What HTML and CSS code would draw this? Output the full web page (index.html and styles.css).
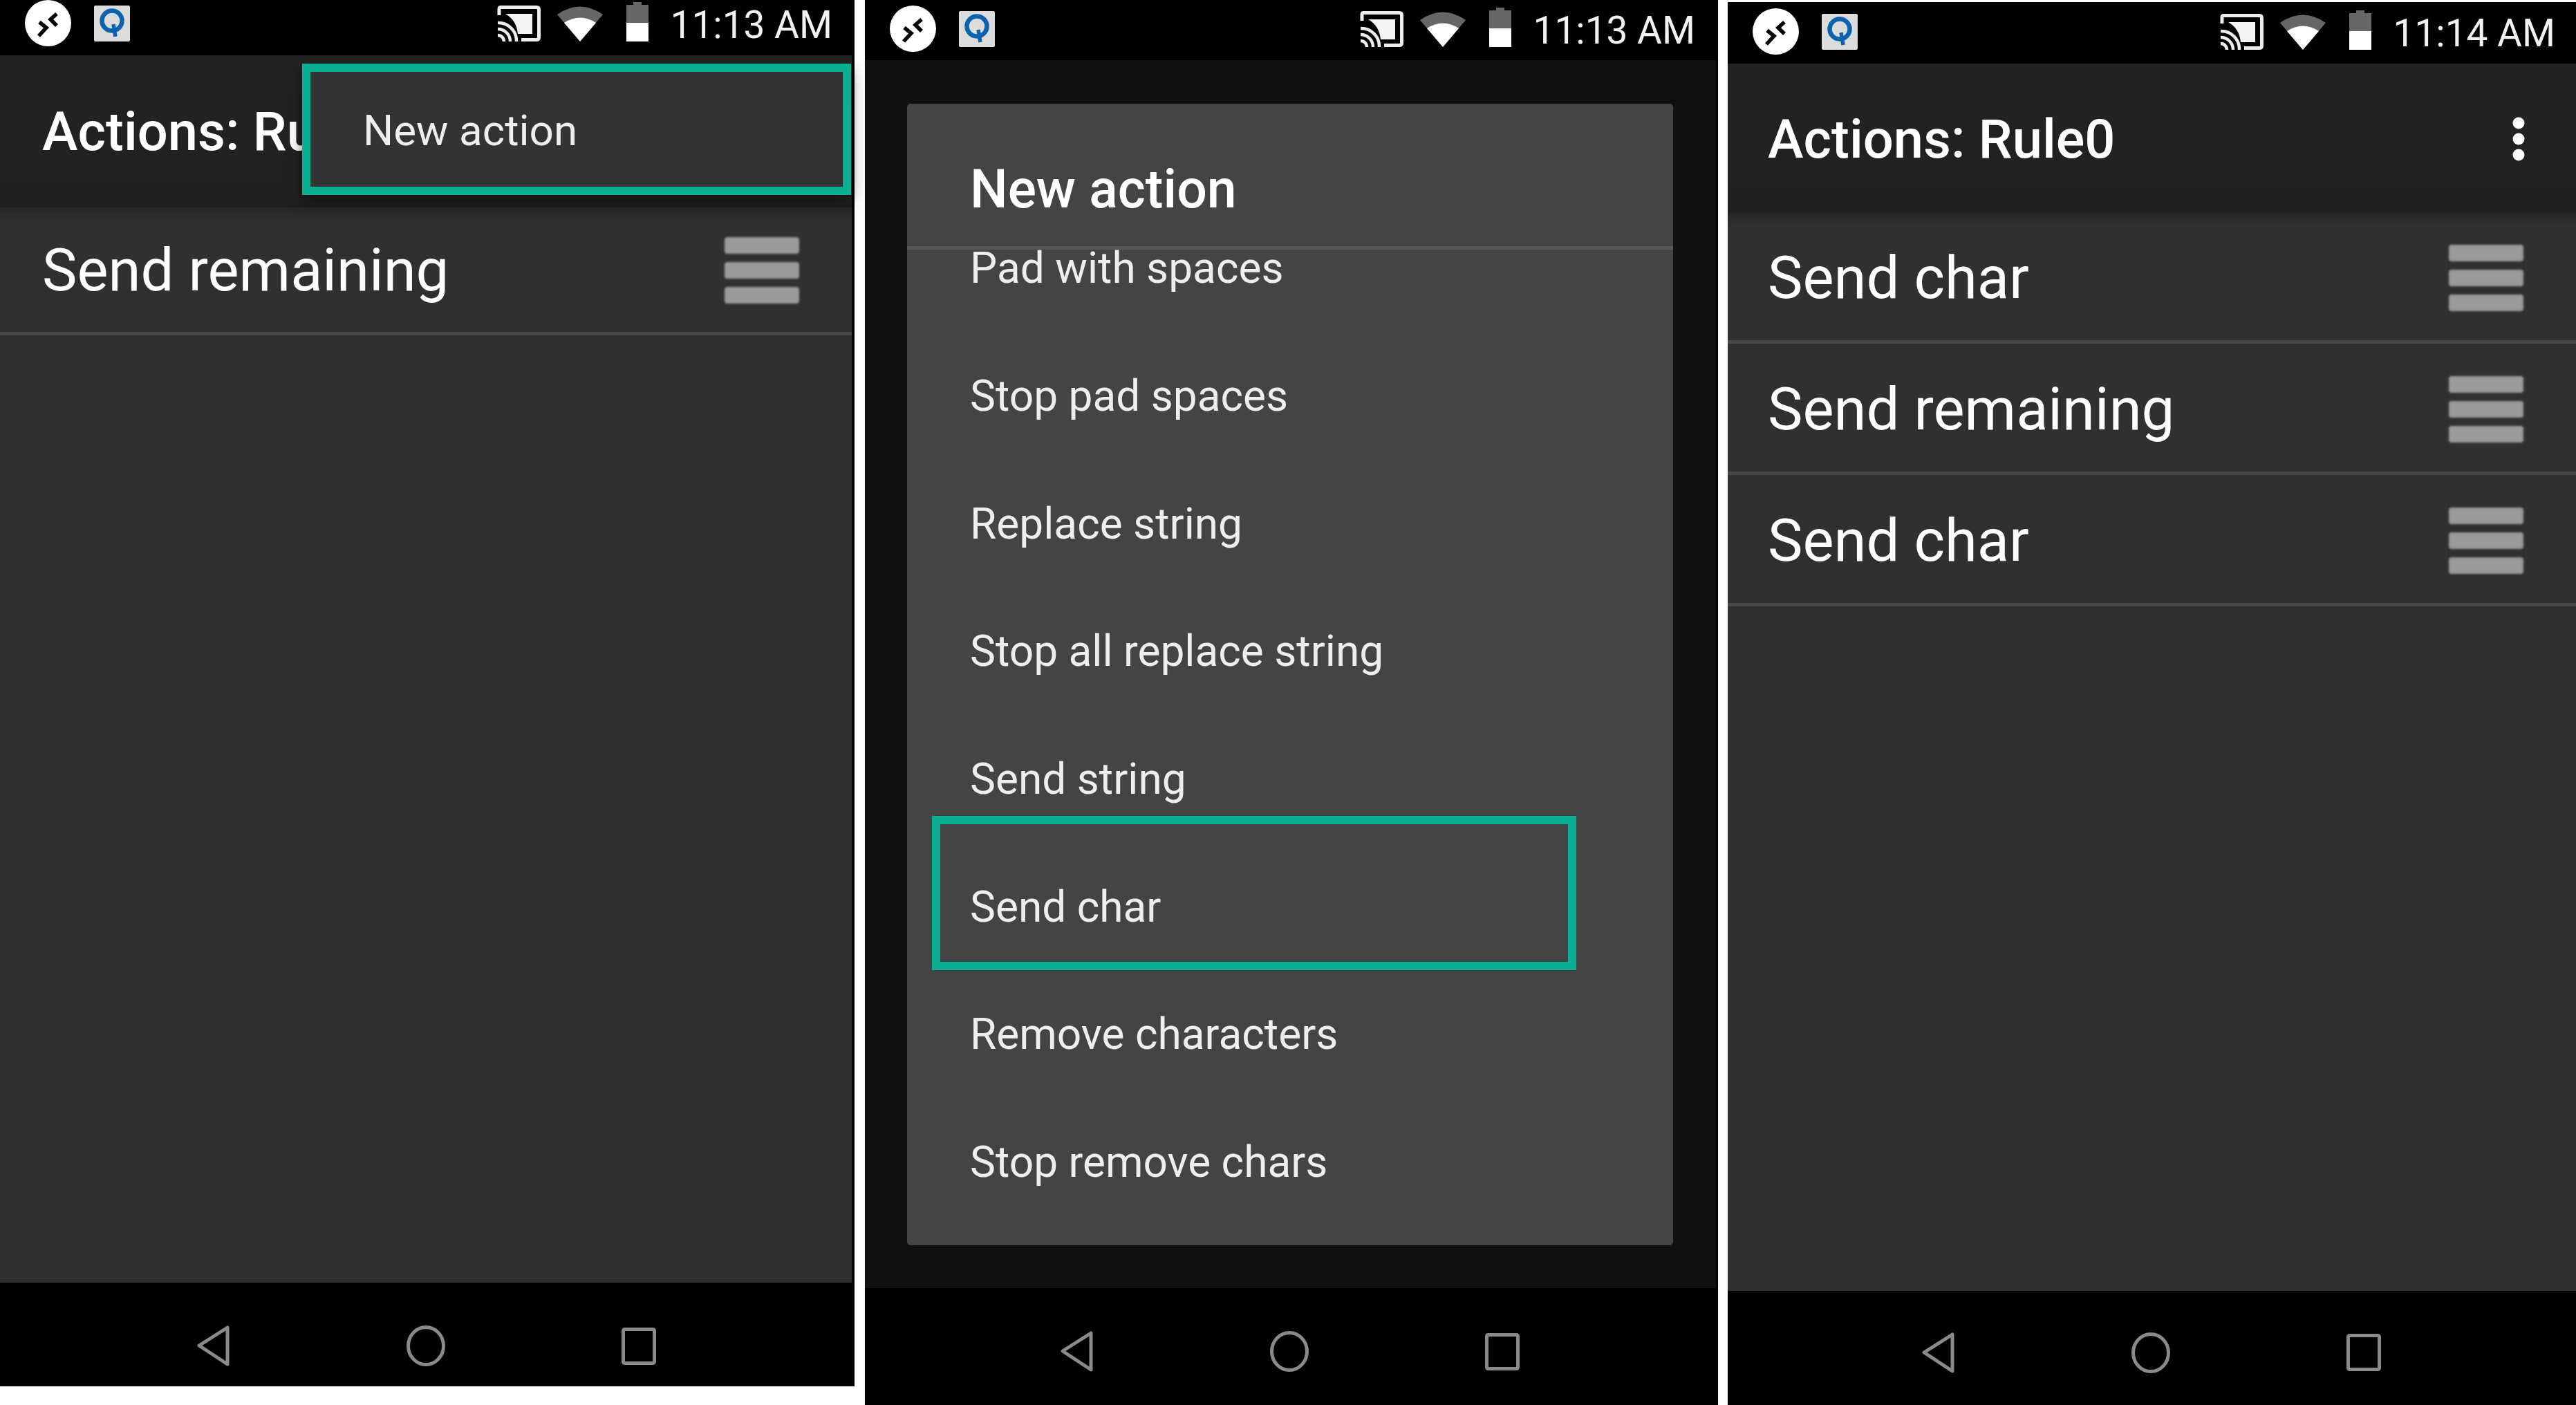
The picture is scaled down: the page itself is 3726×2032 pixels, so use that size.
FILE: index.html
```html
<!DOCTYPE html>
<html lang="en">
<head>
<meta charset="utf-8">
<title>Actions: Rule0</title>
<link rel="stylesheet" href="styles.css">
</head>
<body>
<svg class="defs" aria-hidden="true">
  <symbol id="i-remote" viewBox="0 0 67 67"><circle cx="33.5" cy="33.5" r="33.5" fill="#fff"/><path d="M46 20l-9 8 9 9M21 32l10 8-11 12" fill="none" stroke="#000" stroke-width="5.5"/></symbol>
  <symbol id="i-q" viewBox="0 0 52 52"><rect width="52" height="52" rx="2" fill="#dcdcdc"/><circle cx="26" cy="22" r="14.5" fill="none" stroke="#0d62ad" stroke-width="6.5"/><path d="M28 27l3 18" stroke="#0d62ad" stroke-width="5.5"/></symbol>
  <symbol id="i-cast" viewBox="0 0 63 52"><path d="M3 14V5q0-2.500 2.500-2.500H57q3.500 0 3.500 3.500v40q0 3.500-3.500 3.500H35" fill="none" stroke="#eee" stroke-width="5"/><path d="M1 25a26 26 0 0 1 27 27M1 34a18 18 0 0 1 18 18M1 43a9 9 0 0 1 9 9" fill="none" stroke="#eee" stroke-width="4.500"/><path d="M12 12h39v29H30q-2-20-18-29z" fill="#f4f4f4"/></symbol>
  <symbol id="i-wifi" viewBox="0 0 66 52"><path d="M33 52L0 13Q33-10 66 13z" fill="#666"/><path d="M33 52L10 25Q33 10 56 25z" fill="#fff"/></symbol>
  <symbol id="i-batt" viewBox="0 0 32 57"><path d="M10 0h12v4h10v53H0V4h10z" fill="#666"/><path d="M0 30h32v27H0z" fill="#fff"/></symbol>
  <symbol id="i-back" viewBox="0 0 48 59"><path d="M45 3v53L4 29z" fill="none" stroke="#8a8a8a" stroke-width="5" stroke-linejoin="round"/></symbol>
  <symbol id="i-home" viewBox="0 0 56 59"><ellipse cx="28" cy="29.500" rx="25.500" ry="27" fill="none" stroke="#8a8a8a" stroke-width="5"/></symbol>
  <symbol id="i-recent" viewBox="0 0 50 54"><rect x="2.500" y="2.500" width="45" height="49" rx="2" fill="none" stroke="#8a8a8a" stroke-width="5"/></symbol>
  <symbol id="i-drag" viewBox="0 0 108 96"><path d="M4 0h100a4 4 0 0 1 4 4v16a4 4 0 0 1-4 4H4a4 4 0 0 1-4-4V4a4 4 0 0 1 4-4zM4 36h100a4 4 0 0 1 4 4v16a4 4 0 0 1-4 4H4a4 4 0 0 1-4-4V40a4 4 0 0 1 4-4zM4 72h100a4 4 0 0 1 4 4v16a4 4 0 0 1-4 4H4a4 4 0 0 1-4-4V76a4 4 0 0 1 4-4z" fill="#9a9a9a"/></symbol>
  <symbol id="i-more" viewBox="0 0 18 64"><circle cx="9" cy="9" r="8.500" fill="#fff"/><circle cx="9" cy="32" r="8.500" fill="#fff"/><circle cx="9" cy="55" r="8.500" fill="#fff"/></symbol>
</svg>

<section class="phone phone-one">
  <header class="status">
    <div class="status-left">
      <svg class="ic-remote"><use href="#i-remote"/></svg>
      <svg class="ic-q"><use href="#i-q"/></svg>
    </div>
    <div class="status-right">
      <svg class="ic-cast"><use href="#i-cast"/></svg>
      <svg class="ic-wifi"><use href="#i-wifi"/></svg>
      <svg class="ic-batt"><use href="#i-batt"/></svg>
      <span class="time">11:13 AM</span>
    </div>
  </header>
  <div class="appbar"><span class="title">Actions: Rule0</span></div>
  <main class="content">
    <div class="row"><span class="row-text">Send remaining</span><svg class="ic-drag"><use href="#i-drag"/></svg></div>
  </main>
  <nav class="nav">
    <svg class="ic-back"><use href="#i-back"/></svg>
    <svg class="ic-home"><use href="#i-home"/></svg>
    <svg class="ic-recent"><use href="#i-recent"/></svg>
  </nav>
  <div class="popup"><span class="popup-text">New action</span></div>
</section>

<section class="phone phone-two">
  <header class="status">
    <div class="status-left">
      <svg class="ic-remote"><use href="#i-remote"/></svg>
      <svg class="ic-q"><use href="#i-q"/></svg>
    </div>
    <div class="status-right">
      <svg class="ic-cast"><use href="#i-cast"/></svg>
      <svg class="ic-wifi"><use href="#i-wifi"/></svg>
      <svg class="ic-batt"><use href="#i-batt"/></svg>
      <span class="time">11:13 AM</span>
    </div>
  </header>
  <main class="dim">
    <div class="dialog">
      <div class="dialog-title"><span class="dialog-title-text">New action</span></div>
      <ul class="dialog-list">
        <li class="item item-first"><span class="item-text">Pad with spaces</span></li>
        <li class="item"><span class="item-text">Stop pad spaces</span></li>
        <li class="item"><span class="item-text">Replace string</span></li>
        <li class="item"><span class="item-text">Stop all replace string</span></li>
        <li class="item"><span class="item-text">Send string</span></li>
        <li class="item"><span class="item-text">Send char</span><span class="highlight"></span></li>
        <li class="item"><span class="item-text">Remove characters</span></li>
        <li class="item"><span class="item-text">Stop remove chars</span></li>
      </ul>
    </div>
  </main>
  <nav class="nav">
    <svg class="ic-back"><use href="#i-back"/></svg>
    <svg class="ic-home"><use href="#i-home"/></svg>
    <svg class="ic-recent"><use href="#i-recent"/></svg>
  </nav>
</section>

<section class="phone phone-three">
  <header class="status">
    <div class="status-left">
      <svg class="ic-remote"><use href="#i-remote"/></svg>
      <svg class="ic-q"><use href="#i-q"/></svg>
    </div>
    <div class="status-right">
      <svg class="ic-cast"><use href="#i-cast"/></svg>
      <svg class="ic-wifi"><use href="#i-wifi"/></svg>
      <svg class="ic-batt"><use href="#i-batt"/></svg>
      <span class="time">11:14 AM</span>
    </div>
  </header>
  <div class="appbar"><span class="title">Actions: Rule0</span><svg class="ic-more"><use href="#i-more"/></svg></div>
  <main class="content">
    <div class="row"><span class="row-text">Send char</span><svg class="ic-drag"><use href="#i-drag"/></svg></div>
    <div class="row"><span class="row-text">Send remaining</span><svg class="ic-drag"><use href="#i-drag"/></svg></div>
    <div class="row"><span class="row-text">Send char</span><svg class="ic-drag"><use href="#i-drag"/></svg></div>
  </main>
  <nav class="nav">
    <svg class="ic-back"><use href="#i-back"/></svg>
    <svg class="ic-home"><use href="#i-home"/></svg>
    <svg class="ic-recent"><use href="#i-recent"/></svg>
  </nav>
</section>
</body>
</html>
```
FILE: styles.css
```css
* { box-sizing: border-box; }

html, body { height: 100%; }

body {
  margin: 0;
  height: 2032px;
  overflow: hidden;
  display: flex;
  align-items: flex-start;
  background: #fff;
  color: #fff;
  font-family: Roboto, "Liberation Sans", sans-serif;
}

.defs { position: absolute; width: 0; height: 0; }

svg { display: block; flex: none; }

.phone {
  position: relative;
  display: flex;
  flex-direction: column;
  background: #000;
  flex: none;
}

.phone-one {
  width: 1236px;
  height: 2005px;
  border-right: 4px solid #000;
  margin-right: 15px;
  --status: 80px;
  --status-pad: 13px;
  --status-end: 28px;
  --bar-left: 61px;
  --bar-height: 220px;
  --bar-top: 0px;
  --row-height: 185px;
  --row-top: 2px;
  --nav-height: 150px;
  --nav-pad: 33px;
  --nav-end: 0px;
}

.phone-two {
  width: 1234px;
  height: 2032px;
  border-right: 3px solid #000;
  margin-right: 14px;
  --status: 87px;
  --status-pad: 12px;
  --status-end: 30px;
  --nav-height: 169px;
  --nav-pad: 14px;
  --nav-end: 3px;
}

.phone-three {
  width: 1227px;
  height: 2029px;
  margin-top: 3px;
  --status: 89px;
  --status-pad: 13px;
  --status-end: 30px;
  --bar-left: 58px;
  --bar-height: 215px;
  --bar-top: 3px;
  --row-height: 190px;
  --row-top: 5px;
  --nav-height: 165px;
  --nav-pad: 13px;
  --nav-end: 4px;
}

/* status bar */
.status {
  flex: none;
  height: var(--status);
  padding: 0 var(--status-end) var(--status-pad) 36px;
  display: flex;
  justify-content: space-between;
  align-items: flex-end;
  background: #000;
  filter: blur(.7px);
}

.status-left, .status-right { display: flex; align-items: flex-end; }

.ic-remote { width: 67px; height: 67px; }
.ic-q { width: 52px; height: 52px; margin: 0 0 7px 33px; }
.ic-cast { width: 63px; height: 52px; margin-bottom: 7px; }
.ic-wifi { width: 66px; height: 52px; margin: 0 0 7px 24px; }
.ic-batt { width: 32px; height: 57px; margin: 0 0 7px 34px; }

.time {
  margin: 0 0 2px 31px;
  font-size: 55px;
  line-height: 57px;
  white-space: nowrap;
  color: #f2f2f2;
}

/* app bar */
.appbar {
  flex: none;
  height: var(--bar-height);
  padding: var(--bar-top) 74px 0 var(--bar-left);
  display: flex;
  justify-content: space-between;
  align-items: center;
  background: linear-gradient(#232323, #212120 85%, #1f1f1e);
}

.title {
  font-size: 77.700px;
  font-weight: 500;
  white-space: nowrap;
  filter: blur(.7px);
}

.ic-more { width: 18px; height: 64px; filter: blur(.7px); }

/* list */
.content {
  flex: 1;
  background: #303030;
  background-image: linear-gradient(#262626, #303030 24px);
}

.row {
  height: var(--row-height);
  padding: var(--row-top) 76px 0 var(--bar-left);
  display: flex;
  justify-content: space-between;
  align-items: center;
  border-bottom: 5px solid #484848;
}

.row-text {
  font-size: 85px;
  white-space: nowrap;
  filter: blur(.7px);
}

.ic-drag { width: 108px; height: 96px; filter: blur(1.4px); }

/* nav bar */
.nav {
  flex: none;
  height: var(--nav-height);
  padding: var(--nav-pad) var(--nav-end) 0 0;
  display: grid;
  grid-template-columns: repeat(3, 308px);
  justify-content: center;
  justify-items: center;
  align-items: center;
  background: #000;
  filter: blur(.7px);
}

.ic-back { width: 48px; height: 59px; }
.ic-home { width: 56px; height: 59px; }
.ic-recent { width: 50px; height: 54px; }

/* overflow menu */
.popup {
  position: absolute;
  top: 92px;
  left: 437px;
  width: 794px;
  height: 190px;
  padding: 3px 0 0 76px;
  display: flex;
  align-items: center;
  background: #333;
  border: 12px solid #0aae90;
  box-shadow: 0 8px 20px rgba(0, 0, 0, .45);
}

.popup-text {
  font-size: 62px;
  white-space: nowrap;
  color: #eee;
  filter: blur(.7px);
}

/* dialog */
.dim {
  flex: 1;
  min-height: 0;
  padding: 63px 62px 62px 61px;
  display: flex;
  background: #101010;
}

.dialog {
  flex: 1;
  min-width: 0;
  display: flex;
  flex-direction: column;
  background: #444;
  border-radius: 5px;
}

.dialog-title {
  flex: none;
  height: 211px;
  padding: 42px 0 0 91px;
  display: flex;
  align-items: center;
  border-bottom: 5px solid #555;
}

.dialog-title-text {
  font-size: 77px;
  font-weight: 500;
  white-space: nowrap;
  filter: blur(.7px);
}

.dialog-list {
  flex: 1;
  min-height: 0;
  margin: 0;
  padding: 0;
  list-style: none;
}

.item {
  position: relative;
  height: 184.700px;
  padding-left: 91px;
  display: flex;
  align-items: center;
}

.item-first { margin-top: -65px; }

.item-text {
  font-size: 62.200px;
  line-height: 46px;
  white-space: nowrap;
  color: #eee;
  filter: blur(.7px);
}

.highlight {
  position: absolute;
  top: -39px;
  left: 36px;
  width: 932px;
  height: 223px;
  border: 12px solid #0aae90;
}
```
